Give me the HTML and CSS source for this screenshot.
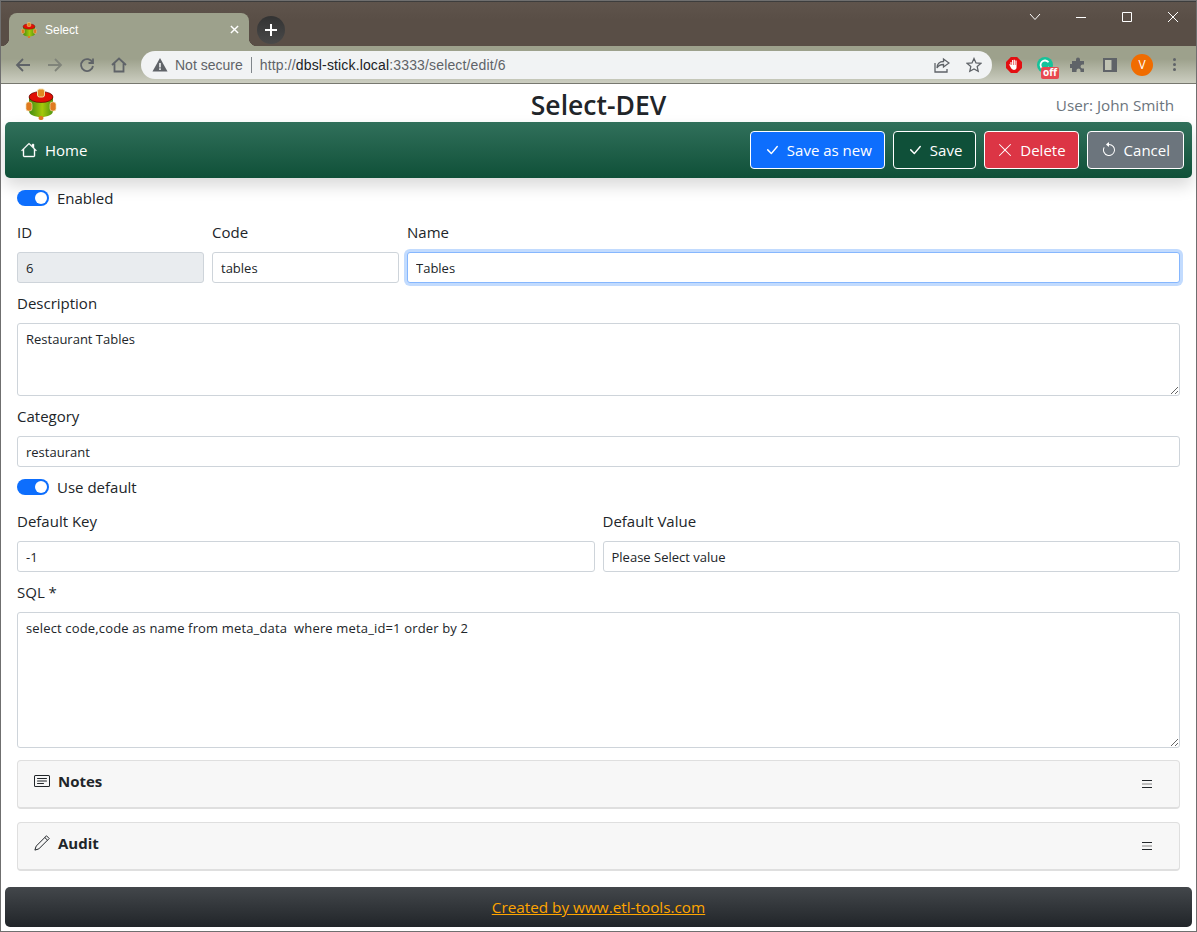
FILE: index.html
```html
<!DOCTYPE html>
<html lang="en">
<head>
  <meta charset="UTF-8">
  <title>Select</title>
  <link rel="stylesheet" href="styles.css">
</head>
<body>
  <svg class="defs" width="0" height="0">
    <defs>
      <linearGradient id="drum">
        <stop offset="0" stop-color="#3f8a12"/>
        <stop offset=".55" stop-color="#a5c80a"/>
        <stop offset="1" stop-color="#4f9410"/>
      </linearGradient>
    </defs>
    <symbol id="logo" viewBox="0 0 32 32">
      <path d="M4 9v14c0 3.500 5 6 12 6s12-2.500 12-6V9z" fill="url(#drum)"/>
      <ellipse cx="16" cy="9" rx="12" ry="5.500" fill="#e01005" stroke="#400" stroke-width=".6"/>
      <rect x="12.500" y="1" width="7" height="8" rx="2" fill="#e08a20" stroke="#f3dfa8"/>
      <rect x="1" y="14" width="6" height="9" rx="2.500" fill="#e07a20" stroke="#f3dfa8" stroke-width=".7"/>
      <rect x="25" y="14" width="6" height="9" rx="2.500" fill="#e07a20" stroke="#f3dfa8" stroke-width=".7"/>
      <rect x="13.500" y="28" width="5" height="4" rx="2" fill="#e07a20"/>
    </symbol>
    <symbol id="check" viewBox="0 0 16 16">
      <path d="M12.736 3.970a.733.733 0 0 1 1.047 0c.286.289.29.756.01 1.050L7.880 12.010a.733.733 0 0 1-1.065.02L3.217 8.384a.757.757 0 0 1 0-1.060.733.733 0 0 1 1.047 0l3.052 3.093 5.400-6.425a.247.247 0 0 1 .02-.022Z"/>
    </symbol>
  </svg>

  <div class="window">
    <div class="titlebar">
      <div class="tab">
        <svg class="favicon"><use href="#logo"/></svg>
        <span class="tab-title">Select</span>
        <svg class="tab-close" viewBox="0 0 10 10"><path d="M1 1l8 8M9 1l-8 8"/></svg>
      </div>
      <div class="new-tab">
        <svg viewBox="0 0 12 12"><path d="M6 0v12M0 6h12"/></svg>
      </div>
      <div class="win-controls">
        <svg class="win-btn" viewBox="0 0 46 30"><path d="M18 12l5 5.500 5-5.500"/></svg>
        <svg class="win-btn" viewBox="0 0 46 30"><path d="M18 15.500h10"/></svg>
        <svg class="win-btn" viewBox="0 0 46 30"><path d="M18.500 10.500h9v9h-9z"/></svg>
        <svg class="win-btn" viewBox="0 0 46 30"><path d="M18 10l10 10M28 10l-10 10"/></svg>
      </div>
    </div>

    <div class="toolbar">
      <svg class="tool-icon" viewBox="0 0 16 16"><path d="M15 8H2M8 2L2 8l6 6"/></svg>
      <svg class="tool-icon faded" viewBox="0 0 16 16"><path d="M1 8h13M8 2l6 6-6 6"/></svg>
      <svg class="tool-icon" viewBox="0 0 16 16"><path d="M13.500 5.500A6 6 0 1 0 14 9M14 1.500v4.500H9.500"/></svg>
      <svg class="tool-icon" viewBox="0 0 16 16"><path d="M1 8l7-6.500L15 8M3.500 6.500v8h9v-8"/></svg>
      <div class="omnibox">
        <svg class="warn" viewBox="0 0 16 16"><path d="M8 1L15.500 14.500H.5z" fill="#5f6368"/><path d="M7.200 6h1.600v4.500H7.200zM7.200 11.300h1.600v1.600H7.200z" fill="#f1f3f4"/></svg>
        <span class="not-secure">Not secure</span>
        <span class="omni-sep"></span>
        <span class="url">http://<b>dbsl-stick.local</b>:3333/select/edit/6</span>
        <svg class="omni-icon share" viewBox="0 0 16 16"><path d="M9.500 2l5.500 4-5.500 4V7.500C6 7.500 4 9 3 11c0-4 2.500-6.500 6.500-6.500zM1 6v9h12v-3"/></svg>
        <svg class="omni-icon star" viewBox="0 0 16 16"><path d="M8 1.500l2 4.400 4.800.5-3.600 3.200 1 4.700L8 11.900l-4.200 2.400 1-4.700L1.200 6.400 6 5.900z"/></svg>
      </div>
      <div class="extensions">
        <svg class="ext" viewBox="0 0 18 18"><path d="M5.500 0h7L18 5.500v7L12.500 18h-7L0 12.500v-7z" fill="#e30f12"/><path d="M5 9V5.500h1.200V9h.6V3.500H8V9h.6V3H10v6h.6V4h1.300v7.500c0 2-1.300 3-3 3-2 0-3-1.500-4-3.500L3.500 8.500c.6-.6 1.200-.2 1.500.5z" fill="#fff"/></svg>
        <div class="grammarly">
          <svg viewBox="0 0 18 18"><circle cx="9" cy="9" r="9" fill="#15c39a"/><path d="M13 6a5 5 0 1 0 .5 5" fill="none" stroke="#fff" stroke-width="2"/></svg>
          <span class="off-badge">off</span>
        </div>
        <svg class="ext puzzle" viewBox="0 0 16 16"><path d="M6 2.500a2 2 0 0 1 4 0V4h4v3.500h-1.500a2 2 0 0 0 0 4H14V15h-3.500v-1.500a2 2 0 0 0-4 0V15H2v-4H.8a2 2 0 0 1 0-4H2V4h4z" fill="#5f6368"/></svg>
        <svg class="ext side" viewBox="0 0 14 14"><path d="M0 0h14v14H0z" fill="#5f6368"/><path d="M2 2h6.500v10H2z" fill="#c0c3b3"/></svg>
        <span class="avatar">V</span>
        <span class="kebab"><i></i><i></i><i></i></span>
      </div>
    </div>

    <div class="page">
      <header class="app-head">
        <svg class="app-logo"><use href="#logo"/></svg>
        <h1>Select-DEV</h1>
        <span class="user">User: John Smith</span>
      </header>

      <nav class="navbar">
        <a class="home">
          <svg class="bi bi-home" viewBox="0 0 16 16"><path fill-rule="evenodd" d="M2 13.500V7h1v6.500a.5.5 0 0 0 .5.5h9a.5.5 0 0 0 .5-.5V7h1v6.500a1.500 1.500 0 0 1-1.500 1.500h-9A1.500 1.500 0 0 1 2 13.500zm11-11V6l-2-2V2.500a.5.5 0 0 1 .5-.5h1a.5.5 0 0 1 .5.5z"/><path fill-rule="evenodd" d="M7.293 1.500a1 1 0 0 1 1.414 0l6.647 6.646a.5.5 0 0 1-.708.708L8 2.207 1.354 8.854a.5.5 0 1 1-.708-.708L7.293 1.500z"/></svg>
          Home
        </a>
        <div class="actions">
          <button class="btn btn-blue"><svg class="bi"><use href="#check"/></svg>Save as new</button>
          <button class="btn btn-green"><svg class="bi"><use href="#check"/></svg>Save</button>
          <button class="btn btn-red"><svg class="bi" viewBox="0 0 16 16"><path d="M2.146 2.854a.5.5 0 1 1 .708-.708L8 7.293l5.146-5.147a.5.5 0 0 1 .708.708L8.707 8l5.147 5.146a.5.5 0 0 1-.708.708L8 8.707l-5.146 5.147a.5.5 0 0 1-.708-.708L7.293 8 2.146 2.854Z"/></svg>Delete</button>
          <button class="btn btn-grey"><svg class="bi" viewBox="0 0 16 16"><path fill-rule="evenodd" d="M8 3a5 5 0 1 1-4.546 2.914.5.5 0 0 0-.908-.417A6 6 0 1 0 8 2v1z"/><path d="M8 4.466V.534a.25.25 0 0 0-.41-.192L5.230 2.308a.25.25 0 0 0 0 .384l2.360 1.966A.25.25 0 0 0 8 4.466z"/></svg>Cancel</button>
        </div>
      </nav>

      <form class="form">
        <div class="switch-row"><span class="switch"></span>Enabled</div>

        <div class="row">
          <div class="field col-id">
            <label>ID</label>
            <input class="input" value="6" disabled>
          </div>
          <div class="field col-id">
            <label>Code</label>
            <input class="input" value="tables">
          </div>
          <div class="field col-fill">
            <label>Name</label>
            <input class="input focus" value="Tables">
          </div>
        </div>

        <div class="field">
          <label>Description</label>
          <textarea class="input area-desc">Restaurant Tables</textarea>
        </div>

        <div class="field">
          <label>Category</label>
          <input class="input" value="restaurant">
        </div>

        <div class="switch-row"><span class="switch"></span>Use default</div>

        <div class="row">
          <div class="field col-fill">
            <label>Default Key</label>
            <input class="input" value="-1">
          </div>
          <div class="field col-fill">
            <label>Default Value</label>
            <input class="input" value="Please Select value">
          </div>
        </div>

        <div class="field">
          <label>SQL *</label>
          <textarea class="input area-sql">select code,code as name from meta_data  where meta_id=1 order by 2</textarea>
        </div>

        <div class="panel panel-first">
          <svg class="bi" viewBox="0 0 16 16"><path d="M14.500 3a.5.5 0 0 1 .5.5v9a.5.5 0 0 1-.5.5h-13a.5.5 0 0 1-.5-.5v-9a.5.5 0 0 1 .5-.5h13zm-13-1A1.500 1.500 0 0 0 0 3.500v9A1.500 1.500 0 0 0 1.500 14h13a1.500 1.500 0 0 0 1.500-1.500v-9A1.500 1.500 0 0 0 14.500 2h-13z"/><path d="M3 5.500a.5.5 0 0 1 .5-.5h9a.5.5 0 0 1 0 1h-9a.5.5 0 0 1-.5-.5zM3 8a.5.5 0 0 1 .5-.5h9a.5.5 0 0 1 0 1h-9A.5.5 0 0 1 3 8zm0 2.500a.5.5 0 0 1 .5-.5h6a.5.5 0 0 1 0 1h-6a.5.5 0 0 1-.5-.5z"/></svg>
          <span class="panel-title">Notes</span>
          <span class="burger"><i></i><i class="mid"></i><i></i></span>
        </div>
        <div class="panel">
          <svg class="bi pencil" viewBox="0 0 16 16"><path d="M12.500 .8L15.200 3.500 4.800 13.900 .9 15.100 2.100 11.200zM10.800 2.500l2.700 2.700"/></svg>
          <span class="panel-title">Audit</span>
          <span class="burger"><i></i><i class="mid"></i><i></i></span>
        </div>
      </form>

      <footer class="footer"><a href="#">Created by www.etl-tools.com</a></footer>
    </div>
  </div>
</body>
</html>
```

FILE: styles.css
```css
* {
  box-sizing: border-box;
}

html, body {
  margin: 0;
  padding: 0;
}

body {
  font-family: "Open Sans", "Noto Sans", Arial, sans-serif;
  color: #212529;
  background-color: #fff;
}

.defs {
  position: absolute;
}

.window {
  width: 1197px;
  height: 932px;
  display: flex;
  flex-direction: column;
  overflow: hidden;
  border: 1px solid #6f6f6f;
}

/* browser chrome */
.titlebar {
  height: 45px;
  flex: none;
  display: flex;
  align-items: flex-end;
  padding-left: 8px;
  background: linear-gradient(#5f544c, #594e46 40%);
  border-top: 1px solid #3d3d3d;
}

.tab {
  width: 240px;
  height: 33px;
  display: flex;
  align-items: center;
  padding: 0 6px 0 12px;
  background-color: #9da18c;
  border-radius: 8px 8px 0 0;
  color: #fff;
  position: relative;
}

/* the little flares at the foot of the tab */
.tab::before,
.tab::after {
  content: "";
  position: absolute;
  bottom: 0;
  width: 8px;
  height: 8px;
}

.tab::before {
  left: -8px;
  background: radial-gradient(circle at 0 0, transparent 8px, #9da18c 8.500px);
}

.tab::after {
  right: -8px;
  background: radial-gradient(circle at 100% 0, transparent 8px, #9da18c 8.500px);
}

.favicon {
  width: 16px;
  height: 16px;
  flex: none;
}

.tab-title {
  flex: 1;
  margin-left: 8px;
  font-family: "Liberation Sans", Arial, sans-serif;
  font-size: 12px;
}

.tab-close {
  width: 9px;
  height: 9px;
  margin-right: 4px;
  fill: none;
  stroke: #fff;
  stroke-width: 1.6;
}

.new-tab {
  width: 28px;
  height: 28px;
  margin: 0 0 2px 8px;
  display: flex;
  align-items: center;
  justify-content: center;
  align-self: flex-end;
  border-radius: 50%;
  background: linear-gradient(#333, #494949);
}

.new-tab svg {
  width: 12px;
  height: 12px;
  fill: none;
  stroke: #fff;
  stroke-width: 2;
}

.win-controls {
  margin-left: auto;
  align-self: flex-start;
  display: flex;
}

.win-btn {
  width: 46px;
  height: 30px;
  fill: none;
  stroke: #fff;
  stroke-width: 1;
}

.toolbar {
  height: 38px;
  flex: none;
  display: flex;
  align-items: center;
  padding-left: 14px;
  gap: 16px;
  background: linear-gradient(#9da18c, #9da18c 35%, #cccec1);
  border-bottom: 1px solid #77786f;
}

.tool-icon {
  width: 16px;
  height: 16px;
  flex: none;
  fill: none;
  stroke: #5f6368;
  stroke-width: 1.8;
}

.tool-icon.faded {
  stroke: #80847a;
}

.omnibox {
  width: 851px;
  height: 28px;
  margin-left: -2px;
  display: flex;
  align-items: center;
  padding: 0 10px 0 11px;
  background-color: #f1f3f4;
  border-radius: 14px;
  font-family: "Liberation Sans", Arial, sans-serif;
  font-size: 14px;
  color: #5f6368;
}

.warn {
  width: 16px;
  height: 16px;
  flex: none;
}

.not-secure {
  margin-left: 7px;
}

.omni-sep {
  width: 1px;
  height: 16px;
  margin: 0 8px;
  background-color: #80868b;
}

.url {
  flex: 1;
  white-space: pre;
  letter-spacing: .15px;
}

.url b {
  font-weight: normal;
  color: #202124;
}

.omni-icon {
  width: 16px;
  height: 16px;
  margin-left: 16px;
  fill: none;
  stroke: #5f6368;
  stroke-width: 1.3;
}

.extensions {
  display: flex;
  align-items: center;
  margin-left: -2px;
}

.ext {
  width: 16px;
  height: 16px;
  flex: none;
}

.grammarly {
  width: 16px;
  height: 16px;
  margin-left: 15px;
  position: relative;
}

.grammarly svg {
  display: block;
}

.off-badge {
  position: absolute;
  left: 4px;
  top: 10px;
  width: 18px;
  height: 12px;
  background-color: #e8484f;
  border-radius: 2px;
  color: #fff;
  font-size: 10px;
  font-weight: 700;
  line-height: 11px;
  text-align: center;
}

.puzzle {
  margin-left: 17px;
}

.side {
  width: 14px;
  height: 14px;
  margin-left: 17px;
}

.avatar {
  width: 22px;
  height: 22px;
  margin-left: 14px;
  border-radius: 50%;
  background-color: #f06c00;
  color: #fff;
  font-size: 12px;
  line-height: 22px;
  text-align: center;
}

.kebab {
  margin-left: 20px;
  display: flex;
  flex-direction: column;
  gap: 2px;
}

.kebab i {
  width: 3px;
  height: 3px;
  border-radius: 50%;
  background-color: #5f6368;
}

/* page */
.page {
  flex: 1;
  display: flex;
  flex-direction: column;
  padding: 0 4px;
  min-height: 0;
}

.app-head {
  height: 38px;
  flex: none;
  display: flex;
  align-items: center;
  justify-content: space-between;
  position: relative;
  padding: 0 18px 0 20px;
}

.app-logo {
  width: 32px;
  height: 32px;
  margin-top: 2px;
}

.app-head h1 {
  margin: 4px 0 0;
  font-size: 26.500px;
  font-weight: 600;
  line-height: 32px;
  position: absolute;
  left: 0;
  right: 0;
  text-align: center;
}

.user {
  font-size: 15.250px;
  color: #6c757d;
  margin-top: 3px;
}

.navbar {
  height: 56px;
  flex: none;
  display: flex;
  align-items: center;
  justify-content: space-between;
  padding: 0 8px 0 16px;
  background: linear-gradient(#31705b, #0f5038);
  border-radius: 5px;
  box-shadow: 0 8px 16px rgba(0, 0, 0, .15);
  color: #fff;
  position: relative;
}

.home {
  display: flex;
  align-items: center;
  gap: 8px;
  font-size: 15px;
}

.bi {
  width: 16px;
  height: 16px;
  flex: none;
  fill: currentColor;
}

.bi-home {
  stroke: currentColor;
  stroke-width: .4;
}

.pencil {
  fill: none;
  stroke: #212529;
  stroke-width: 1;
}

.actions {
  display: flex;
  gap: 8px;
}

.btn {
  height: 38px;
  display: flex;
  align-items: center;
  gap: 7px;
  padding: 0 12px 0 13px;
  border: 1px solid #fff;
  border-radius: 4px;
  color: #fff;
  font: inherit;
  font-size: 15px;
}

.btn-blue { background-color: #0d6efd; }
.btn-green { background-color: #0f5039; padding-right: 13px; }
.btn-red { background-color: #dc3545; padding-left: 12px; }
.btn-grey { background-color: #6c757d; padding-right: 13px; }

.form {
  flex: 1;
  display: flex;
  flex-direction: column;
  padding: 0 12px;
}

.switch-row {
  height: 24px;
  display: flex;
  align-items: center;
  gap: 8px;
  font-size: 15px;
  margin-top: 8px;
}

.form > .field {
  margin-top: 8px;
}

.switch {
  width: 32px;
  height: 16px;
  border-radius: 8px;
  background-color: #0d6efd;
  position: relative;
}

.switch::after {
  content: "";
  position: absolute;
  right: 2px;
  top: 2px;
  width: 12px;
  height: 12px;
  border-radius: 50%;
  background-color: #fff;
}

.row {
  display: flex;
  gap: 8px;
  margin-top: 10px;
}

.field {
  display: flex;
  flex-direction: column;
}

.col-id {
  width: 187px;
  flex: none;
}

.col-fill {
  flex: 1;
}

.field label {
  height: 24px;
  margin-bottom: 8px;
  font-size: 15px;
  line-height: 24px;
}

.input {
  width: 100%;
  height: 31px;
  display: block;
  padding: 4px 8px;
  border: 1px solid #ced4da;
  border-radius: 3px;
  background-color: #fff;
  color: #212529;
  font-family: inherit;
  font-size: 13px;
  line-height: 21px;
  outline: none;
}

.input:disabled {
  background-color: #e9ecef;
  opacity: 1;
}

.focus {
  border-color: #86b7fe;
  box-shadow: 0 0 0 3px rgba(13, 110, 253, .25);
}

.area-desc {
  height: 73px;
  padding-top: 5px;
}

.area-sql {
  height: 136px;
  padding-top: 5px;
  letter-spacing: .15px;
}

.panel {
  height: 49px;
  flex: none;
  display: flex;
  align-items: center;
  margin-top: 13px;
  padding: 0 27px 7px 16px;
  gap: 8px;
  background-color: #f7f7f7;
  border: 1px solid #dfdfdf;
  border-bottom-width: 2px;
  border-radius: 4px;
}

.panel-first {
  margin-top: 12px;
}

.panel-title {
  flex: 1;
  font-size: 15px;
  font-weight: 700;
}

.burger {
  display: flex;
  flex-direction: column;
  gap: 2px;
  margin-top: 6px;
}

.burger i {
  width: 10px;
  height: 1px;
  background-color: #212529;
}

.burger .mid {
  height: 2px;
  background-color: #bdbdbd;
}

.footer {
  height: 40px;
  flex: none;
  margin-top: auto;
  margin-bottom: 4px;
  display: flex;
  align-items: center;
  justify-content: center;
  background: linear-gradient(#43474b, #212529);
  border-radius: 5px;
  font-size: 15.300px;
}

.footer a {
  color: #ffa500;
}
```
